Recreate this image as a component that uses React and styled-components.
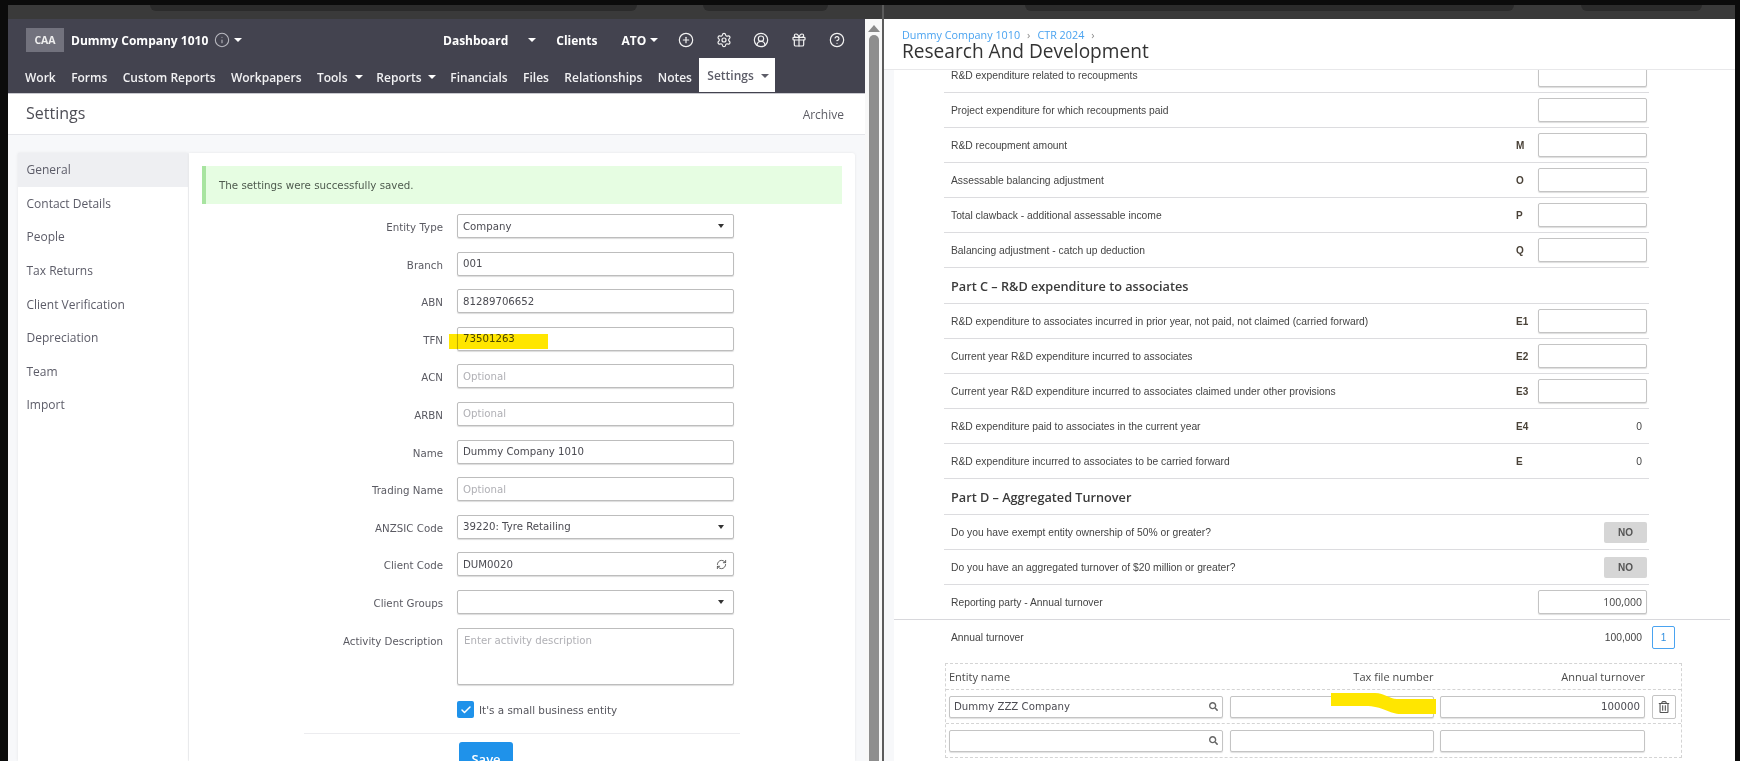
import React from "react";
import styled, { createGlobalStyle } from "styled-components";
import { CirclePlus, Settings as SettingsIcon, CircleUserRound, Gift, CircleHelp, Info, RefreshCw, Check } from "lucide-react";
import { FaSearch, FaRegTrashAlt } from "react-icons/fa";

const Global = createGlobalStyle`
  html, body { margin: 0; padding: 0; background: #0b0b0b; }
  * { box-sizing: border-box; }
`;

const OPEN = `"Open Sans", "Noto Sans", sans-serif`;
const DEJA = `"DejaVu Sans", Verdana, sans-serif`;
const ARIAL = `"Liberation Sans", Arial, sans-serif`;

const Page = styled.div`
  width: 1740px; height: 761px; padding: 5px 5px 0 8px; display: flex; overflow: hidden; background: #0b0b0b;
`;
const LeftCol = styled.div`width: 874px; display: flex; flex-direction: column; flex: none;`;
const Divider = styled.div`width: 2px; background: #5c5c5c; flex: none;`;
const RightCol = styled.div`flex: 1; min-width: 0; display: flex; flex-direction: column;`;
const Strip = styled.div`height: 14px; background: #3a3a3a; display: flex; align-items: flex-start; flex: none;`;
const Pill = styled.div`
  height: 6px; margin-left: ${p => p.$gap}px; width: ${p => p.$w}px; background: #2b2b2b; border-radius: 0 0 8px 8px;
`;

const LeftBody = styled.div`flex: 1; display: flex; min-height: 0;`;
const LeftMain = styled.div`width: 857px; display: flex; flex-direction: column; background: #f7f8fa;`;

const Scrollbar = styled.div`width: 17px; background: #f8f8f8; display: flex; flex-direction: column; align-items: center; flex: none; padding-top: 6px;`;
const ScrollArrow = styled.div`
  width: 0; height: 0; border-left: 6px solid transparent; border-right: 6px solid transparent; border-bottom: 7px solid #8a8a8a;
`;
const ScrollThumb = styled.div`width: 10px; flex: 1; margin-top: 3px; background: #8e8e8e; border-radius: 5px 5px 0 0;`;

const Header = styled.header`height: 75px; background: #43434f; display: flex; flex-direction: column; border-bottom: 1px solid #c9c9cf; flex: none;`;
const TopRow = styled.div`height: 41px; display: flex; align-items: center; padding: 1px 0 0 18px; color: #fff;`;
const Avatar = styled.div`
  width: 38px; height: 24px; background: #72727d; color: #eee; font: 700 10.5px ${OPEN}; display: flex; align-items: center; justify-content: center;
`;
const Company = styled.div`font: 700 12px ${OPEN}; margin-left: 7px; white-space: nowrap; width: 143px;`;
const InfoWrap = styled.span`display: inline-flex; color: #b9b9c0; width: 20px;`;
const Caret = styled.span`
  display: inline-block; width: 0; height: 0; flex: none;
  margin-left: ${p => p.$ml || 0}px;
  border-left: ${p => p.$size || 4}px solid transparent; border-right: ${p => p.$size || 4}px solid transparent;
  border-top: ${p => (p.$size || 4) + 0.5}px solid ${p => p.$color || "#fff"};
`;
const TopRight = styled.div`margin-left: 201px; display: flex; align-items: center;`;
const TopLink = styled.span`font: 700 12px ${OPEN}; white-space: nowrap; margin-left: ${p => p.$ml || 0}px; margin-right: ${p => p.$mr || 0}px;`;
const IconRow = styled.div`display: flex; align-items: center; gap: 21.6px; margin-left: 20px; color: #f2f2f2;`;

const NavRow = styled.nav`height: 32px; display: flex; align-items: stretch; padding-left: 17px; gap: 15.4px;`;
const NavItem = styled.a`
  font: 600 12px ${OPEN}; color: ${p => (p.$active ? "#5d5d68" : "#f1f1f3")}; display: flex; align-items: center; gap: 7px; white-space: nowrap;
  padding-top: 2px;
  margin-right: ${p => (p.$caret ? "-1.6px" : "0")};
  ${p => p.$active && `background:#fff; padding: 1px 7px 0 8px; margin-left: -8px; height: 34px; margin-top: -2px; width: 76px;`}
`;

const TitleBar = styled.div`
  height: 41px; background: #fff; border-bottom: 1px solid #e5e6ea; display: flex; align-items: center; justify-content: space-between; padding: 0 21px 0 18px; flex: none;
`;
const Title = styled.h1`margin: -2px 0 0 0; font: 400 16px ${OPEN}; color: #4d4d55;`;
const Archive = styled.a`font: 400 12px ${OPEN}; color: #5d5d65;`;

const Content = styled.div`flex: 1; display: flex; padding: 18px 10px 0 10px; min-height: 0; overflow: hidden;`;
const Side = styled.aside`width: 170px; background: #fff; box-shadow: 0 0 3px rgba(0,0,0,.08); flex: none;`;
const SideItem = styled.div`
  height: 33.6px; display: flex; align-items: center; padding-left: 8.5px; font: 400 12px ${OPEN}; color: #5c5c68;
  background: ${p => (p.$active ? "#eeeff2" : "#fff")};
`;
const MainCard = styled.main`
  flex: 1; margin-left: 1px; background: #fff; padding: 13px 13px 0 13px; box-shadow: 0 0 3px rgba(0,0,0,.08); border-radius: 0 3px 0 0; overflow: hidden;
`;
const Alert = styled.div`
  height: 38px; background: #e6fde2; border-left: 4px solid #a8e4a0; padding-left: 13px; display: flex; align-items: center;
  font: 400 10.3px ${DEJA}; color: #4e5a4e;
`;
const Form = styled.div`display: grid; grid-template-columns: 241px 277px; column-gap: 14px; row-gap: 13.6px; margin-top: 10px;`;
const Label = styled.label`
  font: 400 10.25px ${DEJA}; color: #5a5a62; text-align: right; padding-top: 7px; white-space: nowrap;
`;
const Field = styled.div`
  position: relative; height: ${p => p.$h || 24}px; background: #fff; border: 1px solid #bdbdbd; border-radius: 2px; box-shadow: 0 1px 1px #dcdcdc;
  display: flex; align-items: ${p => (p.$area ? "flex-start" : "center")}; justify-content: space-between;
  padding: ${p => (p.$area ? "6px 6px" : "0 9px 0 5px")};
  font: 400 10.2px ${DEJA}; color: ${p => (p.$ph ? "#b0b0b5" : "#4b4b52")};
`;
const Highlight = styled.div`
  position: absolute; left: -9px; top: 6px; width: 99px; height: 15px; background: #ffe600; mix-blend-mode: multiply;
`;
const CheckLine = styled.div`grid-column: 2; display: flex; align-items: center; gap: 5px; margin-top: 3px; font: 400 10.4px ${DEJA}; color: #55555c;`;
const CheckBox = styled.span`
  width: 17px; height: 17px; background: #1f92ea; border-radius: 2px; display: inline-flex; align-items: center; justify-content: center; color: #fff;
`;
const Rule = styled.hr`border: 0; height: 1px; background: #ececef; width: 436px; margin: 15px 0 0 102px;`;
const SaveBtn = styled.button`
  display: block; margin: 8px 0 0 257px; width: 54px; height: 34px; border: 0; border-radius: 3px 3px 0 0; background: #1f92ea; color: #fff; font: 600 13px ${OPEN}; padding: 0;
`;

const RightHead = styled.div`height: 51px; background: #fff; border-bottom: 1px solid #e8e8ea; padding: 9px 0 0 18px; flex: none;`;
const Crumbs = styled.div`display: flex; gap: 7px; align-items: center; font: 400 10.8px/14px ${OPEN}; color: #4aa3f0; height: 14px;`;
const CrumbSep = styled.span`color: #8a8a8a; font-size: 11px;`;
const HeadTitle = styled.h2`margin: 0; font: 500 19.1px/18px ${OPEN}; color: #333;`;
const RightBody = styled.div`flex: 1; background: #f7f8fa; padding-left: 10px; min-height: 0; overflow: hidden;`;
const Sheet = styled.div`height: 100%; background: #fff; padding-left: 50px; overflow: hidden;`;
const Rows = styled.div`width: 705px;`;
const Row = styled.div`
  height: ${p => p.$h || 35}px; display: flex; align-items: center; padding: 0 2px 0 7px; border-bottom: ${p => (p.$wide ? "0" : "1px solid #dcdcdf")};
  margin-top: ${p => p.$mt || 0}px; font: 400 10.3px ${ARIAL}; color: #444;
`;
const RowLabel = styled.div`flex: 1; white-space: nowrap;`;
const Code = styled.div`width: 22px; text-align: left; font: 700 10px ${ARIAL}; color: #4a4238;`;
const NumBox = styled.div`
  width: 109px; height: 24px; background: #fff; border: 1px solid #c4c4c4; border-radius: 2px; box-shadow: 0 1px 1px #dddddd;
  display: flex; align-items: center; justify-content: flex-end; padding-right: 4px; font: 400 10.5px ${OPEN}; color: #444;
`;
const Value = styled.div`width: 109px; text-align: right; padding-right: 5px;`;
const NoBtn = styled.div`
  width: 43px; height: 21px; margin-left: 65px; background: #d6d6d6; border-radius: 2px; display: flex; align-items: center; justify-content: center; font: 700 10px ${ARIAL}; color: #555;
`;
const Heading = styled.div`
  height: 36px; display: flex; align-items: center; padding-left: 7px; border-bottom: 1px solid #dcdcdf; font: 600 12.7px ${OPEN}; color: #3a3a3a;
`;
const WideRule = styled.div`height: 1px; margin-left: -50px; width: 836px; background: #d8d8dc;`;
const TurnRow = styled.div`
  width: 731px; height: 34px; display: flex; align-items: center; padding-left: 7px; font: 400 10.3px ${ARIAL}; color: #444;
`;
const TurnValue = styled.div`margin-left: auto; margin-right: 10px;`;
const LinkBtn = styled.div`
  width: 23px; height: 23px; border: 1px solid #4aa3f0; border-radius: 2px; color: #2f8fe0; display: flex; align-items: center; justify-content: center; font: 400 10px ${ARIAL};
`;
const EntityTable = styled.div`
  margin: 9px 0 0 1px; width: 737px; border: 1px dashed #d4d4d4; position: relative;
`;
const TableGrid = styled.div`
  display: grid; grid-template-columns: 274px 204px 205px 30px; column-gap: 6.5px; padding: 0 0 0 3px; align-items: center;
  height: ${p => p.$h}px; border-top: ${p => (p.$first ? "0" : "1px dashed #d4d4d4")};
`;
const HeadCell = styled.div`font: 500 11px ${OPEN}; color: #4a4a4a; text-align: ${p => (p.$right ? "right" : "left")};`;
const Cell = styled.div`
  height: 22px; background: #fff; border: 1px solid #c4c4c4; border-radius: 2px; box-shadow: 0 1px 1px #e0e0e0;
  display: flex; align-items: center; justify-content: ${p => (p.$right ? "flex-end" : "space-between")}; padding: 0 4px; font: 400 10.2px ${DEJA}; color: #4b4b52;
`;
const SearchGlyph = styled.span`display: inline-flex; margin-left: auto; color: #666; transform: scaleX(-1) rotate(90deg);`;
const TrashBtn = styled.div`
  width: 24px; height: 24px; border: 1px solid #c4c4c4; border-radius: 2px; display: flex; align-items: center; justify-content: center; color: #555;
`;
const Swoosh = styled.svg`position: absolute; left: 385px; top: 29px; pointer-events: none;`;

const sideItems = ["General", "Contact Details", "People", "Tax Returns", "Client Verification", "Depreciation", "Team", "Import"];
const navItems = [["Work"], ["Forms"], ["Custom Reports"], ["Workpapers"], ["Tools", 1], ["Reports", 1], ["Financials"], ["Files"], ["Relationships"], ["Notes"]];

const partB = [
  ["R&D expenditure related to recoupments", ""],
  ["Project expenditure for which recoupments paid", ""],
  ["R&D recoupment amount", "M"],
  ["Assessable balancing adjustment", "O"],
  ["Total clawback - additional assessable income", "P"],
  ["Balancing adjustment - catch up deduction", "Q"],
];
const partC = [
  ["R&D expenditure to associates incurred in prior year, not paid, not claimed (carried forward)", "E1"],
  ["Current year R&D expenditure incurred to associates", "E2"],
  ["Current year R&D expenditure incurred to associates claimed under other provisions", "E3"],
  ["R&D expenditure paid to associates in the current year", "E4", "0"],
  ["R&D expenditure incurred to associates to be carried forward", "E", "0"],
];

const SelectCaret = () => <Caret $size={3.5} $color="#333" />;

export default function App() {
  return (
    <Page>
      <Global />
      <LeftCol>
        <Strip>
          <Pill $gap={142} $w={487} />
          <Pill $gap={66} $w={125} />
        </Strip>
        <LeftBody>
          <LeftMain>
            <Header>
              <TopRow>
                <Avatar>CAA</Avatar>
                <Company>Dummy Company 1010</Company>
                <InfoWrap><Info size={16} strokeWidth={1.6} /></InfoWrap>
                <Caret />
                <TopRight>
                  <TopLink>Dashboard</TopLink>
                  <Caret $ml={20} />
                  <TopLink $ml={20}>Clients</TopLink>
                  <TopLink $ml={24} $mr={4}>ATO</TopLink>
                  <Caret />
                  <IconRow>
                    <CirclePlus size={16} strokeWidth={1.8} />
                    <SettingsIcon size={16} strokeWidth={1.8} />
                    <CircleUserRound size={16} strokeWidth={1.8} />
                    <Gift size={16} strokeWidth={1.8} />
                    <CircleHelp size={16} strokeWidth={1.8} />
                  </IconRow>
                </TopRight>
              </TopRow>
              <NavRow>
                {navItems.map(([t, c]) => (
                  <NavItem key={t} $caret={c}>{t}{c ? <Caret /> : null}</NavItem>
                ))}
                <NavItem $active>Settings<Caret $color="#5d5d68" /></NavItem>
              </NavRow>
            </Header>
            <TitleBar>
              <Title>Settings</Title>
              <Archive>Archive</Archive>
            </TitleBar>
            <Content>
              <Side>
                {sideItems.map((s, i) => <SideItem key={s} $active={i === 0}>{s}</SideItem>)}
              </Side>
              <MainCard>
                <Alert>The settings were successfully saved.</Alert>
                <Form>
                  <Label>Entity Type</Label>
                  <Field>Company<SelectCaret /></Field>
                  <Label>Branch</Label>
                  <Field>001</Field>
                  <Label>ABN</Label>
                  <Field>81289706652</Field>
                  <Label>TFN</Label>
                  <Field>73501263<Highlight /></Field>
                  <Label>ACN</Label>
                  <Field $ph>Optional</Field>
                  <Label>ARBN</Label>
                  <Field $ph>Optional</Field>
                  <Label>Name</Label>
                  <Field>Dummy Company 1010</Field>
                  <Label>Trading Name</Label>
                  <Field $ph>Optional</Field>
                  <Label>ANZSIC Code</Label>
                  <Field>39220: Tyre Retailing<SelectCaret /></Field>
                  <Label>Client Code</Label>
                  <Field>DUM0020<RefreshCw size={11} color="#555" style={{ marginRight: -3 }} /></Field>
                  <Label>Client Groups</Label>
                  <Field><span /><SelectCaret /></Field>
                  <Label>Activity Description</Label>
                  <Field $area $ph $h={57}>Enter activity description</Field>
                  <CheckLine>
                    <CheckBox><Check size={12} strokeWidth={3} /></CheckBox>
                    It's a small business entity
                  </CheckLine>
                </Form>
                <Rule />
                <SaveBtn>Save</SaveBtn>
              </MainCard>
            </Content>
          </LeftMain>
          <Scrollbar>
            <ScrollArrow />
            <ScrollThumb />
          </Scrollbar>
        </LeftBody>
      </LeftCol>
      <Divider />
      <RightCol>
        <Strip>
          <Pill $gap={141} $w={489} />
          <Pill $gap={67} $w={121} />
        </Strip>
        <RightHead>
          <Crumbs>
            <span>Dummy Company 1010</span><CrumbSep>›</CrumbSep><span>CTR 2024</span><CrumbSep>›</CrumbSep>
          </Crumbs>
          <HeadTitle>Research And Development</HeadTitle>
        </RightHead>
        <RightBody>
          <Sheet>
            <Rows>
              {partB.map(([l, c], i) => (
                <Row key={l} $mt={i === 0 ? -12 : 0}>
                  <RowLabel>{l}</RowLabel><Code>{c}</Code><NumBox />
                </Row>
              ))}
              <Heading>Part C – R&amp;D expenditure to associates</Heading>
              {partC.map(([l, c, v]) => (
                <Row key={l}>
                  <RowLabel>{l}</RowLabel><Code>{c}</Code>
                  {v ? <Value>{v}</Value> : <NumBox />}
                </Row>
              ))}
              <Heading>Part D – Aggregated Turnover</Heading>
              <Row>
                <RowLabel>Do you have exempt entity ownership of 50% or greater?</RowLabel>
                <NoBtn>NO</NoBtn>
              </Row>
              <Row>
                <RowLabel>Do you have an aggregated turnover of $20 million or greater?</RowLabel>
                <NoBtn>NO</NoBtn>
              </Row>
              <Row $wide $h={34}>
                <RowLabel>Reporting party - Annual turnover</RowLabel>
                <NumBox>100,000</NumBox>
              </Row>
              <WideRule />
              <TurnRow>
                <span>Annual turnover</span>
                <TurnValue>100,000</TurnValue>
                <LinkBtn>1</LinkBtn>
              </TurnRow>
              <EntityTable>
                <TableGrid $first $h={25}>
                  <HeadCell>Entity name</HeadCell>
                  <HeadCell $right>Tax file number</HeadCell>
                  <HeadCell $right>Annual turnover</HeadCell>
                </TableGrid>
                <TableGrid $h={34}>
                  <Cell>Dummy ZZZ Company<SearchGlyph><FaSearch size={9} /></SearchGlyph></Cell>
                  <Cell />
                  <Cell $right>100000</Cell>
                  <TrashBtn><FaRegTrashAlt size={12} /></TrashBtn>
                </TableGrid>
                <TableGrid $h={34}>
                  <Cell><SearchGlyph><FaSearch size={9} /></SearchGlyph></Cell>
                  <Cell />
                  <Cell />
                </TableGrid>
                <Swoosh width="105" height="23" viewBox="0 0 105 23">
                  <path d="M0 0 H44 C54 0 58 6 66 6 H105 V21 H70 C58 21 52 13 34 13 H0 Z" fill="#ffe600" />
                </Swoosh>
              </EntityTable>
            </Rows>
          </Sheet>
        </RightBody>
      </RightCol>
    </Page>
  );
}
